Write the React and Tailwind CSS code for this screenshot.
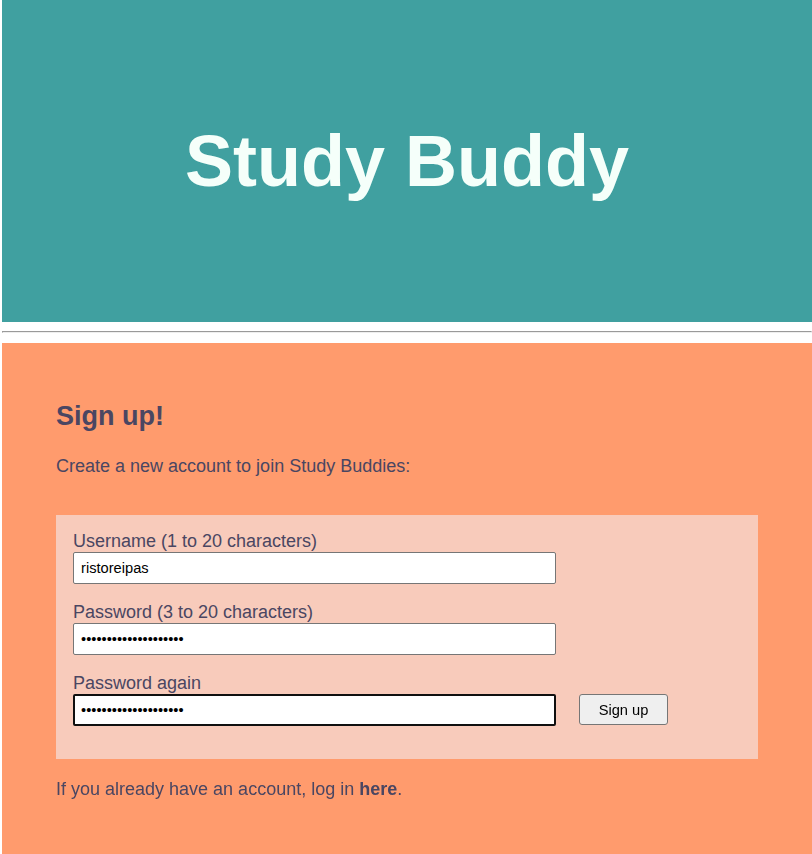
import React, { useState } from 'react';

const Field = ({ label, type, value, onChange, focused, children }) => (
  <div className="flex flex-col">
    <label className="text-[18px] leading-[21px]">{label}</label>
    <div className="flex items-start">
      <input
        type={type}
        value={value}
        onChange={onChange}
        autoFocus={focused}
        className={
          focused
            ? 'w-[483px] h-[32px] rounded-[2px] border-2 border-[#101010] bg-white pl-[6px] text-[14.67px] text-black outline-none font-["Liberation_Sans",sans-serif]'
            : 'w-[483px] h-[32px] rounded-[2px] border border-[#767676] bg-white pl-[7px] text-[14.67px] text-black outline-none font-["Liberation_Sans",sans-serif]'
        }
      />
      {children}
    </div>
  </div>
);

const App = () => {
  const [username, setUsername] = useState('ristoreipas');
  const [password, setPassword] = useState('ristoreipas123456789');
  const [again, setAgain] = useState('ristoreipas123456789');

  const handleSubmit = (e) => {
    e.preventDefault();
  };

  return (
    <div className="min-h-[854px] bg-white pl-[2px] font-['Liberation_Sans',Arial,sans-serif]">
      <header className="h-[322px] bg-[#40a0a0] flex items-center justify-center">
        <h1 className="text-[72px] leading-[72px] font-bold text-[#f5fffa]">Study Buddy</h1>
      </header>

      <hr className="mt-[9px] h-[2px] border-t border-b border-l border-r border-t-[#9a9a9a] border-l-[#9a9a9a] border-b-[#eeeeee] border-r-[#eeeeee]" />

      <main className="mt-[10px] min-h-[511px] bg-[#ff9b6d] px-[54px] pt-[58px] pb-[40px] text-[#4a4662]">
        <h2 className="text-[27px] leading-[30px] font-bold">Sign up!</h2>
        <p className="mt-[25px] text-[18px] leading-[20px]">Create a new account to join Study Buddies:</p>

        <form onSubmit={handleSubmit} className="mt-[39px] bg-[#f8cbbb] pt-[16px] pl-[17px] pb-[33px] flex flex-col gap-[18px]">
          <Field
            label="Username (1 to 20 characters)"
            type="text"
            value={username}
            onChange={(e) => setUsername(e.target.value)}
          />
          <Field
            label="Password (3 to 20 characters)"
            type="password"
            value={password}
            onChange={(e) => setPassword(e.target.value)}
          />
          <Field
            label="Password again"
            type="password"
            value={again}
            onChange={(e) => setAgain(e.target.value)}
            focused
          >
            <button
              type="submit"
              className="ml-[23px] w-[89px] h-[31px] rounded-[3px] border border-[#767676] bg-[#efefef] text-[14.67px] text-black font-['Liberation_Sans',sans-serif]"
            >
              Sign up
            </button>
          </Field>
        </form>

        <p className="mt-[20px] text-[18px] leading-[20px]">
          If you already have an account, log in <a href="#" className="font-bold">here</a>.
        </p>
      </main>
    </div>
  );
};

export default App;
